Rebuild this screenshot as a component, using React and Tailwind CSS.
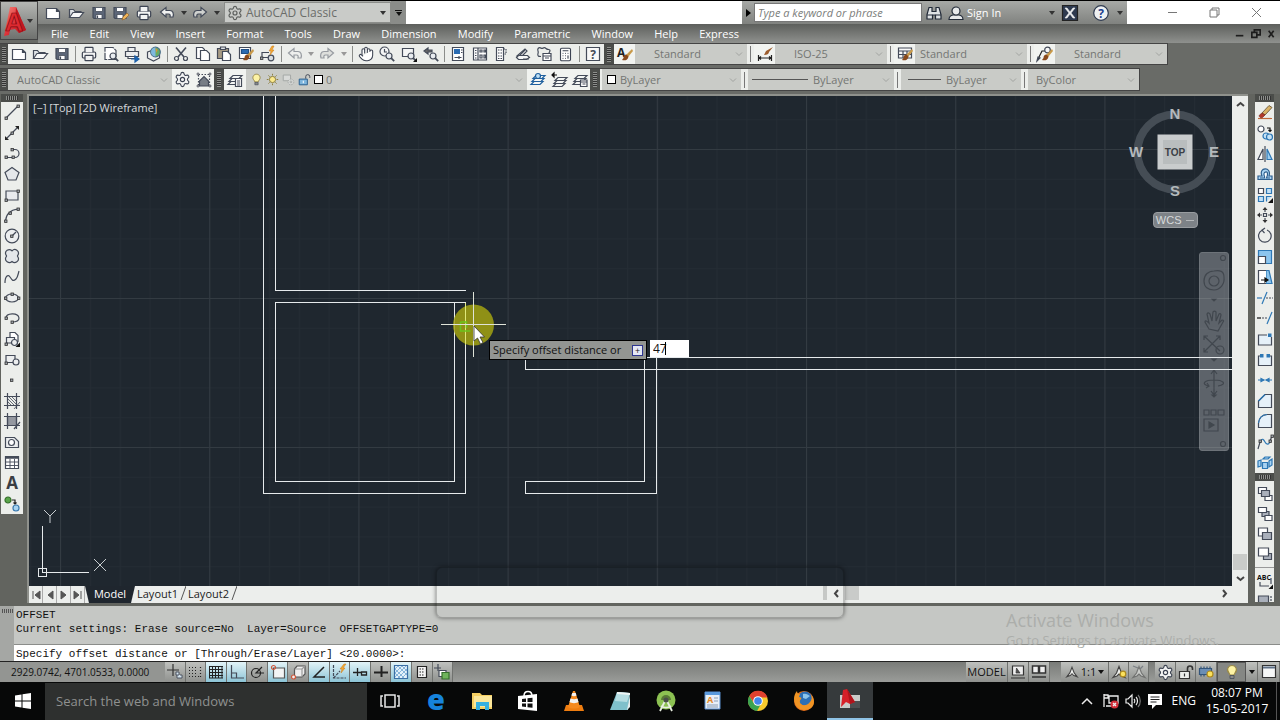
import { Calculator, Hand, Printer, Settings } from "lucide-react";

const INK = "#444b59";

const tree = {
  fill: "none",
  stroke: INK,
  strokeWidth: 1.2,
};

const node = (x, y) => (
  <rect x={x - 1} y={y - 1} width="2.4" height="2.4" fill="#9aa0a8" stroke="#333" strokeWidth="0.8" />
);

const layers = (color) => (
  <g fill="#f4f6f4" stroke={color}>
    <path d="M1 12.5 4 9.5h9l-3 3z" />
    <path d="M2 9.5 5 6.5h9l-3 3z" />
    <path d="M3 6.5 6 3.5h9l-3 3z" />
  </g>
);

const brush = (
  <g stroke="none">
    <path d="M15 3 9 9l2 2 5-6z" fill="#c99a4a" />
    <path d="M9.5 8.5c-2 0-3 1.500-3 3.500L5 14c3 1 6 0 6.500-3.500z" fill="#8a4a1c" />
  </g>
);

const magnifier = (
  <g>
    <circle cx="10" cy="10" r="3" fill="#e8ecf0" />
    <path d="m12.200 12.200 3 3" strokeWidth="1.800" />
  </g>
);

const person = (
  <path d="M8 2.500 5.500 9 2 13.500l4-1.500 2-2 2 2 4 1.500L10.500 9z" fill="#eef0ee" stroke="#444" />
);

const icons = {
  new: <path d="M1.500 3.500h10l3 3v7h-13zM11.500 3.500v3h3" fill="#fff" />,
  open: (
    <g>
      <path d="M1.500 12.500v-8h4l1.500 2h6v2" fill="#dfe3e6" />
      <path d="m1.500 12.500 3.500-5h10.500l-4 5z" fill="#f7f8f8" />
    </g>
  ),
  save: (
    <g>
      <path d="M2 2.500h12v11H3l-1-1z" fill="#5c6678" />
      <path d="M4.500 2.500h7v4h-7zM5 9.500h6v4H5z" fill="#fff" strokeWidth="0.800" />
      <path d="M6.500 10.500v2.500" />
    </g>
  ),
  saveAs: (
    <g>
      <path d="M1 2.500h12v11H2l-1-1z" fill="#5c6678" />
      <path d="M3.500 2.500h7v4h-7zM4 9.500h6v4H4z" fill="#fff" strokeWidth="0.800" />
      <path d="m9 15 1-3 4-4 2 2-4 4z" fill="#f0b45a" stroke="#8a5a22" strokeWidth="0.600" />
    </g>
  ),
  undo: <path d="M1.500 7 7 2.500v3h4c3 0 4 3 3 6.500h-3c.5-2 0-3-1.500-3H7v3z" fill="#f0f1f0" />,
  redo: <path d="M14.500 7 9 2.500v3H5c-3 0-4 3-3 6.500h3c-.5-2 0-3 1.500-3H9v3z" fill="#cfd1cf" />,
  preview: (
    <g>
      <path d="M2 1.500h8l3 3v9H2z" fill="#fff" strokeDasharray="9 1" />
      {magnifier}
    </g>
  ),
  publish: (
    <g>
      <path d="M4 1.500h7v4H4zM1.500 5.500h13v5h-13z" fill="#eceeef" />
      <path d="M4 10.500h7v2H4z" fill="#fff" />
      <path d="M7 13h7M11 10l4 3-4 3z" fill="#1b6ec2" stroke="#1b5ea8" />
    </g>
  ),
  web: (
    <g>
      <path d="m1.500 6 6-2 6 2v6l-6 3-6-3z" fill="#eef0f0" />
      <circle cx="9.500" cy="6" r="4.800" fill="#68ad62" stroke="#4a6e8c" />
      <path d="M9.500 1.500A4.500 4.500 0 0 0 9.500 10.500z" fill="#7fb8e0" stroke="none" />
      <path d="m9.500 2 2 2-1 3z" fill="#ec8b3a" stroke="none" />
    </g>
  ),
  cut: (
    <g>
      <path d="M3 1.500 11 11M13 1.500 5 11" strokeWidth="1.600" />
      <circle cx="3.500" cy="12.500" r="2" />
      <circle cx="12.500" cy="12.500" r="2" />
    </g>
  ),
  copy: (
    <g>
      <path d="M1.500 1.500h6l2 2v9h-8z" fill="#fff" />
      <path d="M5.500 4.500h6l3 3v7h-9z" fill="#fff" />
    </g>
  ),
  paste: (
    <g>
      <path d="M1.500 2.500h11v10h-11z" fill="#a79b84" />
      <path d="M4.500 1h5v2.500h-5z" fill="#dfe2e4" />
      <path d="M6.500 5.500h5l3 3v6h-8z" fill="#fff" />
    </g>
  ),
  match: (
    <g>
      <path d="M1.500 1.500h11v11h-11z" fill="#fff" />
      <path d="M3.500 3.500h7v4h-7z" fill="#2a6bb2" stroke="#1f4f86" />
      {brush}
    </g>
  ),
  block: (
    <g>
      <path d="M3 11.500v-5h7M3 11.500h8" />
      {node(2.5, 12)}
      <circle cx="12" cy="12" r="2.800" fill="#d8dde0" />
      <path d="m13 0-3 5h2l-1 4 4-5h-2l2-4z" fill="#f4a733" stroke="#c67b16" strokeWidth="0.500" />
    </g>
  ),
  zoomTime: (
    <g>
      <circle cx="5.500" cy="5.500" r="4.500" fill="#f4f5f5" />
      <path d="M5.500 3v3h2.500" />
      {magnifier}
    </g>
  ),
  zoomWin: (
    <g>
      <path d="M1.500 2.500h11v8h-11z" fill="#f4f5f5" />
      {magnifier}
      <path d="M16 12v4h-4z" fill="#111" stroke="none" />
    </g>
  ),
  zoomPrev: (
    <g>
      <path d="m1 5 4-3v2h4v2H5v2z" fill="#666" />
      {magnifier}
    </g>
  ),
  props: (
    <g>
      <path d="M2.500 1.500h11v13h-11z" fill="#fff" />
      <path d="M4 3h6v5H4z" fill="#2a6bb2" stroke="none" />
      <path d="M11 4h1.500M11 6.500h1.500M4.500 11.500h7M9 10v3" />
    </g>
  ),
  center: (
    <g>
      <path d="M1.500 2h13v12h-13zM6 2v12" fill="#fff" />
      <path d="M3 4.500h1.500M3 7h1.500M3 9.500h1.500M3 12h1.500M8 4h2v2H8zM12 4h1.500v2H12zM8 9h2v3H8zM12 9h1.500v3H12z" />
    </g>
  ),
  palette: (
    <g>
      <path d="M3.500 1.500h7v13h-7z" fill="#fff" />
      <path d="M10.500 3h2.500v5h-2.500M5 4h4M5 7h4M5 10h4M5 12.500h4" strokeDasharray="1.500 1" />
    </g>
  ),
  sheets: (
    <g fill="#f5f6f6">
      <path d="m2 10 8-7 2 2-6 6z" />
      <path d="m1.500 11.500 2-2h9l2 2-3 2h-8z" />
      <path d="m5 9 5-5M8 13h6" />
    </g>
  ),
  markup: (
    <g>
      <path d="M2 2.500c2-2 3 0 4 0s2-2 4 0 4 0 4 2-2 2-1 4M2 2.500c-1 3 1 2 0 5s1 3 3 3" />
      <path d="M7 7.500h8v7H7zM7 10h8M9 12h4" fill="#fff" />
    </g>
  ),
  help: (
    <g>
      <path d="M1.500 1.500h13v13h-13z" fill="#f8f8f8" />
      <text x="8" y="12.500" textAnchor="middle" fontSize="12" fontWeight="bold" fill={INK} stroke="none">?</text>
    </g>
  ),
  textStyle: (
    <g>
      <text x="0" y="11" fontSize="12" fontWeight="bold" fill="#222" stroke="none">A</text>
      {brush}
    </g>
  ),
  dimStyle: (
    <g>
      <path d="M1.500 9v6M14.500 9v6M2 12h12M4 10.500 2 12l2 1.500M12 10.500l2 1.500-2 1.500" stroke="#222" />
      <path d="M16 1 9 5l-2 4c3 0 5-1 5-3z" fill="#9c5c2c" stroke="none" />
    </g>
  ),
  tableStyle: (
    <g>
      <path d="M1.500 2h13v10h-13zM1.500 5h13M1.500 8.500h13M6 5v7M10 5v7" fill="#f6f7f7" />
      {brush}
    </g>
  ),
  leaderStyle: (
    <g>
      <path d="M1 13 5 5h4" stroke="#222" />
      <path d="m0 15 1-4 2 1z" fill="#222" />
      <circle cx="10.500" cy="4" r="2.800" fill="#f6f7f7" />
      {brush}
    </g>
  ),
  workspace: (
    <g>
      <path d="M2.500 2.500h11v11h-11z" strokeDasharray="1.500 1.500" />
      <path d="M3.500 9 8 4.500l4.500 4.500v5h-9z" fill="#777d86" />
      <path d="M1 1h2v2H1zM13 1h2v2h-2zM1 13h2v2H1zM13 13h2v2h-2z" fill="#aaa" strokeWidth="0.500" />
    </g>
  ),
  layerProps: (
    <g>
      {layers(INK)}
      <path d="M8.500 6.500h6v8h-6z" fill="#fff" />
      <path d="M10 9h3M10 11h3M10 13h3" />
    </g>
  ),
  layerBlue: (
    <g>
      {layers("#1e5f9e")}
      <circle cx="8" cy="4" r="2.500" fill="#bfe0f5" stroke="#1e5f9e" />
    </g>
  ),
  layerPrev: (
    <g>
      <g transform="translate(1 2)">{layers(INK)}</g>
      <path d="M1 3h5M3 1 1 3l2 2z" fill="#111" stroke="#111" />
    </g>
  ),
  layerState: (
    <g>
      {layers(INK)}
      <path d="M8.500 8h6.500v6.500H8.500zM8.500 10H15M10.500 12h3" fill="#fff" />
    </g>
  ),
  bulb: (
    <g>
      <path d="M5 9C2 6 4 1.500 8 1.500S14 6 11 9l-1 2H6z" fill="#fdf3a5" stroke="#9a8a4a" />
      <path d="M6 11.500h4v3H6z" fill="#888" strokeWidth="0.800" />
    </g>
  ),
  sun: (
    <g stroke="#8a7b3a">
      <path d="M8 1v2M8 13v2M1 8h2M13 8h2M3 3l1.500 1.500M11.500 11.500 13 13M13 3l-1.500 1.500M4.500 11.500 3 13" />
      <circle cx="8" cy="8" r="3.800" fill="#fbe98d" />
    </g>
  ),
  freeze: (
    <g stroke="#a4a8a6">
      <path d="M1.500 2.500h9v7h-9z" fill="#d8dad8" />
      <circle cx="11" cy="11" r="3.500" fill="#d8dad8" strokeDasharray="2 1" />
      <circle cx="11" cy="11" r="1.200" />
    </g>
  ),
  unlock: (
    <g>
      <path d="M9.500 7V4.500a2.500 2.500 0 0 1 5 0V6" />
      <path d="M1.500 7.500h10v7h-10z" fill="#7db5dd" stroke="#2a5f8e" />
      <path d="M6.500 9.500v3" stroke="#fff" />
    </g>
  ),
  lockUi: (
    <g stroke="#333">
      <path d="M9.500 7V4.500a2.500 2.500 0 0 1 5 0V6" strokeWidth="1.600" />
      <path d="M1.500 7.500h10v7h-10z" fill="#eceeec" />
      <path d="M6.500 9.500v3" />
    </g>
  ),
  line: <g><path d="M2 14 14 2" />{node(2, 14)}{node(14, 2)}</g>,
  xline: (
    <g>
      <path d="M2 14 14 2" />
      <path d="M1 15v-4l4 4zM15 1v4l-4-4z" fill="#222" stroke="none" />
      {node(8, 8)}
    </g>
  ),
  pline: <g><path d="M2 12.500h7M8 4.500h3a4 4 0 0 1 0 8" />{node(2, 12)}{node(9, 12)}{node(8, 4.5)}</g>,
  polygon: <path d="m8 1.500 7 5-3 7.500H4L1 6.500z" fill="#e4e7ea" />,
  rect: <g><path d="M2 4h12v9H2z" fill="#e8eaed" />{node(2, 13)}{node(14, 4)}</g>,
  arc: <g><path d="M1.500 14C2 7 6 3 14 2" />{node(1.6, 14)}{node(6, 6)}{node(14, 2)}</g>,
  circle: <g><circle cx="8" cy="8" r="6.800" fill="#eceeef" /><path d="m8 8 4-4" />{node(7.6, 8)}</g>,
  cloud: (
    <path
      d="M8 2.800c3-3 8 0 6 4.200-1 1-1 1 0 2 2 4-3 7-6 4.500C5 16 0 13 2 9c1-1 1-1 0-2C0 3 5 0 8 2.800z"
      fill="#e4e7ea"
    />
  ),
  spline: <path d="M1 14c0-7 3-9 5-6s3 5 6 2c2-2 2-5 3-8" />,
  ellipse: <g><ellipse cx="8" cy="8" rx="6.500" ry="4" fill="#eceeef" />{node(1.5, 8)}{node(14.500, 8)}{node(8, 4)}</g>,
  ellipseArc: <g><path d="M2 8c0-5 12-6 13 0 0 3-4 4-7 4" />{node(2, 8)}{node(8, 12)}</g>,
  insert: (
    <g>
      <path d="M6 1.500h5l3 3v6H6z" fill="#fff" />
      <path d="M2.500 12V6.500h8V12z" fill="#eceeef" />
      <circle cx="10.500" cy="11.500" r="3" fill="#eceeef" />
      <path d="M16 11.500V16h-4.500z" fill="#111" stroke="none" />
      {node(2, 13)}
    </g>
  ),
  makeBlock: (
    <g>
      <path d="M2 11.500v-7h9v7z" fill="#eceeef" />
      <circle cx="12" cy="11" r="3" fill="#eceeef" />
      {node(2, 12)}
    </g>
  ),
  point: node(7.500, 8),
  hatch: (
    <g>
      <path d="M3.500 0v16M12.500 0v16M0 3.500h16M0 12.500h16" />
      <path d="m4 9 3 3M4 6l6 6M5 4l7 7M8 4l4 4M16 9l-6 7" strokeWidth="0.800" />
    </g>
  ),
  gradient: (
    <g>
      <path d="M3.500 3.500h9v9h-9z" fill="#9498a0" />
      <path d="M3.500 0v16M12.500 0v16M0 3.500h16M0 12.500h16M16 9l-6 7" />
    </g>
  ),
  region: <g><path d="M1.500 3.500h9l4 4v6h-13z" fill="#eceeef" /><circle cx="7.500" cy="8.500" r="3" fill="#fff" /></g>,
  table: (
    <g>
      <path d="M1.500 2.500h13v12h-13z" fill="#fff" />
      <path d="M1.500 3.500h13" strokeWidth="2.500" />
      <path d="M1.500 8h13M1.500 11.500h13M6 5v9M10.500 5v9" strokeWidth="0.900" />
    </g>
  ),
  mtext: <text x="8" y="14" textAnchor="middle" fontSize="17" fontWeight="bold" fill="#3a3d42" stroke="none">A</text>,
  addSel: (
    <g>
      <circle cx="4" cy="4" r="3" fill="#5aa54a" stroke="#35702b" />
      <circle cx="12" cy="12" r="3" fill="#a8d4f2" stroke="#3a7ab0" />
      <path d="M8 4h3v4M9.500 6.500 11 8l1.500-1.500" stroke="#222" />
    </g>
  ),
  erase: (
    <g>
      <path d="M1 14.500h14" stroke="#c06a3c" />
      <path d="m5 9 7-7.500 3 2L8 11z" fill="#d9b266" stroke="#6b5a3c" strokeWidth="0.900" />
      <path d="m5 9 3 2-2.500 2.500c-2 1-4-1-3-2.500z" fill="#b3392b" stroke="#7a2a20" strokeWidth="0.700" />
    </g>
  ),
  copyObj: (
    <g>
      <circle cx="4" cy="4" r="3" fill="#fff" />
      <circle cx="9" cy="11" r="3" fill="#c5e2f6" stroke="#2e78b5" />
      <circle cx="12.500" cy="12" r="3" fill="#c5e2f6" stroke="#2e78b5" />
      <path d="M10 3h3v3M11.500 5 13 6.500 14.500 5" stroke="#111" />
    </g>
  ),
  mirror: (
    <g>
      <path d="M6 3v10.500H1z" fill="#fff" />
      <path d="M10 3v10.500h5z" fill="#9ccdf0" stroke="#2e78b5" />
      <path d="M8 0v16" />
    </g>
  ),
  offset: (
    <g stroke="#2e5f8e">
      <path d="M1 13.500V10h4C1 1 15 0 12 10h3v3.500z" fill="#a9d3f2" />
      <path d="M3 12h4.500c1-2-2-3 0-5.500 3-2 4 1 2 5.500H13" fill="#fff" />
    </g>
  ),
  array: (
    <g>
      <path d="M1.500 1.500h5v5h-5z" fill="#fff" />
      <path d="M9.500 1.500h5v5h-5zM1.500 9.500h5v5h-5zM9.500 14.500v-5h5" fill="#c5e2f6" stroke="#2e78b5" />
      <path d="M16 11v5h-5z" fill="#111" stroke="none" />
    </g>
  ),
  move: (
    <g>
      <path d="M8 0 5.500 3h5zM8 16l-2.500-3h5zM0 8l3-2.500v5zM16 8l-3-2.500v5z" fill="#333" stroke="none" />
      <path d="M8 3v2M8 11v2M3 8h2M11 8h2M6.500 6.500h3v3h-3z" />
    </g>
  ),
  rotate: <path d="M10 2a6.300 6.300 0 1 1-5 .3M8 0 5 2.200 7.500 5" />,
  scale: (
    <g>
      <path d="M1.500 1.500h13v13h-13z" fill="#8cc5ee" stroke="#2e78b5" />
      <path d="M1.500 7.500h7v7h-7z" fill="#fff" />
    </g>
  ),
  stretch: (
    <g>
      <path d="M9 1.500h3l3 13H9z" fill="#8cc5ee" stroke="#2e78b5" />
      <path d="M9 1.500H1.500v13H9" fill="#fff" />
      <path d="M4 11h6M8 9l3 2-3 2z" fill="#111" stroke="#111" />
    </g>
  ),
  trim: <g><path d="M10 2 5 14" stroke="#2e78b5" /><path d="M0 8h5" stroke="#2e78b5" /><path d="M9 8h7" strokeDasharray="2 1" /></g>,
  extend: <g><path d="M15 2 10 14" stroke="#2e78b5" /><path d="M0 8h4" stroke="#111" /><path d="M5 8h6" strokeDasharray="2 1" /></g>,
  breakPt: <g><path d="M14.500 6v8h-13V4H10" fill="#e6f1f9" /><path d="M11 2.500h3.500v3.500H11z" fill="#2e78b5" stroke="none" /></g>,
  breakObj: (
    <g>
      <path d="M3 4H1.500v9.500h13V4H13" fill="#e6f1f9" />
      <path d="M3 2h3.500v3.500H3zM9.500 2H13v3.500H9.500z" fill="#2e78b5" stroke="none" />
    </g>
  ),
  join: <path d="M1 8h5M15 8h-5M4 6.500 7 8l-3 1.500zM12 6.500 9 8l3 1.500z" fill="#2e78b5" stroke="#2e78b5" />,
  chamfer: <g><path d="M14.500 1.500v13h-13V8L8 1.500z" fill="#e6f1f9" /><path d="m1.500 8 6.500-6.500" stroke="#2e78b5" /></g>,
  fillet: <g><path d="M14.500 1.500v13h-13V10C2 5 5 2 10 1.500z" fill="#e6f1f9" /><path d="M1.500 10C2 5 5 2 10 1.500" stroke="#2e78b5" /></g>,
  blend: (
    <g>
      <path d="M3 8c2-5 4-2 5 0s4 4 5-1" stroke="#2e78b5" />
      <path d="m1 15 2-7M13 7l2-5" />
      {node(3, 7)}
      {node(13, 7)}
      {node(15, 2)}
    </g>
  ),
  explode: (
    <g fill="#a9d3f2" stroke="#2e78b5">
      <path d="M5.500 7.500h5v6h-5zM1 6l3-1v6l-3 1zM6 4l2-2h5l-2 2zM12 6l3-2v6l-3 2z" />
    </g>
  ),
  front: (
    <g>
      <path d="M1.500 1.500h8v6h-8zM8 9.500h7v5H8z" fill="#fff" />
      <path d="M4.500 4.500h8v6h-8z" fill="#aab0bb" />
    </g>
  ),
  back: (
    <g>
      <path d="M5 5.500h7v5H5z" fill="#aab0bb" />
      <path d="M1.500 1.500h8v5h-8zM8 9.500h7v5H8z" fill="#fff" />
    </g>
  ),
  above: <g><path d="M1.500 2h9v8h-9z" fill="#fff" /><path d="M5.500 6.500h9v7h-9z" fill="#aab0bb" /></g>,
  under: <g><path d="M6.500 7.500h8v6h-8z" fill="#aab0bb" /><path d="M1.500 2h10v8h-10z" fill="#fff" /></g>,
  abcFront: (
    <g>
      <text x="0" y="7" fontSize="7" fontWeight="bold" fill="#111" stroke="none">ABC</text>
      <path d="M3 9v4h9M14 5v6" />
      <path d="M16 11.500V16h-4.500z" fill="#111" stroke="none" />
    </g>
  ),
  hatchBack: <g><path d="M1.500 4h10v8h-10z" fill="#aab0bb" /><path d="M14 4v12" strokeDasharray="2 1" /></g>,
  // status bar
  infer: (
    <g>
      <path d="M0 6h12M6 0v12" stroke="#333" />
      <path d="M9 8h3v3H9zM13 11h2v3h-5v-3" fill="#d5e5ef" strokeWidth="0.900" />
    </g>
  ),
  snap: <path d="M2 3.500h9M2 6.500h9M2 9.500h9M2 12.500h12M13.500 3v10" strokeDasharray="1 2" stroke="#222" />,
  grid: <path d="M1.500 2v12M4.500 2v12M7.500 2v12M10.500 2v12M14 2v12M1 2.500h14M1 5.500h14M1 8.500h14M1 11.500h14M1 14h14" stroke="#222" strokeWidth="1" />,
  ortho: <path d="M2.500 1v13H15M2.500 9h5v5" />,
  polar: <g><circle cx="7" cy="9" r="4.500" stroke="#222" /><path d="M15 9H7l6-6" stroke="#222" /></g>,
  osnap: (
    <g>
      <path d="M3.500 4h11v10h-11z" fill="#f3f4f4" stroke="#555" />
      <circle cx="3.500" cy="3.500" r="2" stroke="#d0563a" />
    </g>
  ),
  osnap3d: (
    <g>
      <path d="M4.500 5 7 2h8v8l-3 3H4.500z" fill="#eee" stroke="#555" />
      <path d="M4.500 5H12v8M12 5l3-3" stroke="#999" />
      <circle cx="3.500" cy="13" r="2" fill="#eee" stroke="#d0563a" />
    </g>
  ),
  otrack: <path d="M13 3 3 13h11" stroke="#222" strokeWidth="1.500" />,
  ducs: (
    <g>
      <path d="M2.500 1v13H15M2.500 14 9 7" strokeDasharray="3 1" />
      <path d="m13 0-4 5h2l-1 4 4-5h-2l3-4z" fill="#f4a733" stroke="#c67b16" strokeWidth="0.500" />
    </g>
  ),
  dyn: <path d="M1 8.500h8M5.500 4v8M9.500 8h5v3h-5z" stroke="#222" strokeWidth="1.300" />,
  lwt: <path d="M1 8.500h14M8.500 2v11" stroke="#222" strokeWidth="2" />,
  tpy: (
    <g>
      <path d="M1.500 1.500h13v13h-13z" fill="#e3f1fa" stroke="#3a6ea5" />
      <path d="m2 5 3-3M2 9l7-7M2 13 13 2M5 14l9-9M9 14l5-5M2 9l5 5M2 5l9 9M5 2l9 9M9 2l5 5" stroke="#6fa6d2" strokeWidth="0.800" />
    </g>
  ),
  qp: <g><path d="M3.500 2.500h9v11h-9z" fill="#f4f4f4" stroke="#222" /><path d="M5.500 5h5M5.500 8h5M5.500 11h5" strokeDasharray="1.500 1" stroke="#222" /></g>,
  sc: (
    <g>
      <path d="M0 4h7M4 0v7" />
      <path d="M5 6.500h7v6H5z" fill="#fff" />
      <path d="M8 8.500h7v6.500H8z" fill="#6fb45c" stroke="#35702b" />
    </g>
  ),
  modelSpace: <g><path d="M2.500 2h11v9h-11zM1 14h14" fill="#eee" stroke="#333" /><path d="m6 9 .5-5L10 9z" fill="#555" stroke="#333" strokeWidth="0.700" /></g>,
  quickView: <path d="M1.500 2h6v7h-6zM8.500 2h6v7h-6zM1 13h14" fill="#eee" stroke="#333" strokeWidth="1.500" />,
  anno: person,
  annoBulb: <g>{person}<circle cx="12" cy="10" r="2.800" fill="#fbe25e" stroke="#ae8a1c" /></g>,
  annoAuto: <g opacity="0.500">{person}<path d="m2 2 5 2M12 2 9 5" /></g>,
  hardware: (
    <g>
      <path d="M1.500 4.500h12v6h-12zM3 2.500v2M6 2.500v2M9 2.500v2M12 2.500v2M3 10.500v2M6 10.500v2" fill="#6b8eb4" stroke="#33557b" />
      <circle cx="12" cy="10" r="3" fill="#fbe25e" stroke="#ae8a1c" />
    </g>
  ),
  clean: <g><path d="M1.500 1.500h13v12h-13z" fill="#f6f7f7" stroke="#333" /><path d="M2 3.500h12" strokeWidth="2" stroke="#5f7188" /></g>,
  binoculars: (
    <g fill="#dfe2e4" stroke="#222a38">
      <path d="M3 2.500h3v4h4v-4h3l2 7v4.500H9.500v-4h-3v4H1V9.500z" />
      <path d="M1 10h5.500M9.500 10H15" />
    </g>
  ),
  user: (
    <g fill="#e8eaec" stroke="#222a38">
      <path d="M1 14.500c0-4 4-4.500 4-4.500h6s4 .5 4 4.500z" />
      <circle cx="8" cy="6" r="4" />
    </g>
  ),
  exchange: (
    <g>
      <path d="M.5.500h15v15H.5z" fill="#2e3a50" stroke="#222" />
      <path d="m3 3 4 5-4 5h2l3-4 3 4h2L9 8l4-5h-2L8 7 5 3z" fill="#eef0f2" stroke="#eef0f2" strokeWidth="0.600" />
    </g>
  ),
  infoHelp: (
    <g>
      <circle cx="8" cy="8" r="7.300" fill="#eef0f2" stroke="#2e3a50" />
      <text x="8" y="12.500" textAnchor="middle" fontSize="12" fontWeight="bold" fill="#1d3f8f" stroke="none">?</text>
    </g>
  ),
};

function Icon({ name, className = "size-4" }) {
  return (
    <svg viewBox="0 0 16 16" className={`${className} shrink-0 overflow-visible`} {...tree} aria-hidden="true">
      {icons[name]}
    </svg>
  );
}

function Glyph({ name }) {
  if (name === "print") return <Printer size={16} strokeWidth={1.8} color="#3c4352" fill="#f2f3f3" />;
  if (name === "hand") return <Hand size={16} strokeWidth={1.6} color="#3c4352" fill="#fff" />;
  if (name === "gear") return <Settings size={17} strokeWidth={1.6} color="#3c4352" fill="#f2f3f3" />;
  if (name === "calc") return <Calculator size={15} strokeWidth={1.8} color="#3c4352" fill="#fff" />;
  return <Icon name={name} />;
}

function ToolButton({ name, className = "flex-1" }) {
  return (
    <button aria-label={name} className={`${className} flex items-center justify-center min-w-0 min-h-0`}>
      <Glyph name={name} />
    </button>
  );
}

function Caret({ className = "border-t-[#333]" }) {
  return <span className={`${className} border-x-3 border-x-transparent border-t-4`} />;
}

function Grip({ width = "w-[10px]" }) {
  return (
    <div className={`${width} shrink-0 bg-[#4b4d4a] flex items-center justify-center`}>
      <span className="w-1 h-[15px] bg-[repeating-linear-gradient(#8d8f8c_0_1px,#333_1px_2px)]" />
    </div>
  );
}

function GripTop() {
  return (
    <div className="h-2 shrink-0 bg-[#4b4d4a] flex items-center justify-center">
      <span className="h-1 w-3 bg-[repeating-linear-gradient(90deg,#8d8f8c_0_1px,#333_1px_2px)]" />
    </div>
  );
}

function Divider() {
  return <span className="w-[6px] shrink-0 flex justify-center"><span className="w-px h-4 bg-[#8b8d8a]" /></span>;
}

function Gap() {
  return (
    <span className="w-[7px] shrink-0 bg-[#eceeeb] flex items-center justify-center">
      <span className="w-px h-4 bg-[#777]" />
    </span>
  );
}

function Drop({ label, value, width, pad = "pl-[18px]", children }) {
  return (
    <div className={`${width} relative flex items-center bg-[#c9cbc7] text-[#747673] shrink-0`}>
      {children}
      <select aria-label={label} className={`${pad} appearance-none flex-1 min-w-0 h-full text-[11px] leading-4 bg-transparent outline-none`}>
        <option>{value}</option>
      </select>
      <svg className="absolute right-1 size-2 pointer-events-none" viewBox="0 0 8 8" fill="none" stroke="#a2a4a1">
        <path d="m1 2.500 3 3 3-3" />
      </svg>
    </div>
  );
}

function Logo() {
  return (
    <button
      aria-label="Application menu"
      className="w-[38px] h-[39px] shrink-0 border border-[#444] bg-linear-to-b from-[#b5b7b4] to-[#6f716e] flex items-center justify-between pr-1"
    >
      <svg viewBox="0 0 26 36" className="w-[26px] h-9 overflow-visible font-['Liberation_Sans',sans-serif]">
        <defs>
          <linearGradient id="logoRed" x1="0" y1="0" x2="1" y2="1">
            <stop offset="0" stopColor="#f4877c" />
            <stop offset="0.500" stopColor="#e0343a" />
            <stop offset="1" stopColor="#a80f18" />
          </linearGradient>
        </defs>
        <path d="M9 4h6l10 23-7 3-4-4-5 1-1 5-5 1z" fill="url(#logoRed)" />
        <path d="M15 4 25 27l-7 3-4-9z" fill="#c01820" />
        <text x="13" y="28" textAnchor="middle" fontSize="25" fontWeight="bold" fill="#dd2a31" stroke="#7d0a10" strokeWidth="0.700">A</text>
      </svg>
      <Caret />
    </button>
  );
}

const menus = ["File", "Edit", "View", "Insert", "Format", "Tools", "Draw", "Dimension", "Modify", "Parametric", "Window", "Help", "Express"];

function Header() {
  return (
    <header className="flex bg-[#696b67] border-t border-black">
      <Logo />
      <div className="flex-1 min-w-0 flex flex-col">
        <div className="h-[23px] flex bg-linear-to-b from-[#a7a9a6] to-[#80827f]">
          <div className="w-[186px] pl-1 flex items-center">
            {["new", "open", "save", "saveAs", "print", "undo"].map((n) => <ToolButton key={n} name={n} />)}
            <button aria-label="Undo list" className="w-3 flex justify-center"><Caret /></button>
            <ToolButton name="redo" className="w-5" />
            <button aria-label="Redo list" className="w-[14px] flex justify-center"><Caret /></button>
          </div>
          <div className="w-[167px] my-px pl-[2px] bg-[#c9cbc8] border border-[#8b8d8a] flex items-center relative">
            <Settings size={16} strokeWidth={1.8} color="#5d605e" />
            <select aria-label="Workspace" className="appearance-none flex-1 h-full pl-[3px] text-[12px] leading-4 text-[#6b6d6a]">
              <option>AutoCAD Classic</option>
            </select>
            <Caret className="absolute right-1 border-t-[#333] pointer-events-none" />
          </div>
          <button aria-label="Customize" className="w-[15px] bg-[#8a8c89] flex flex-col items-center justify-center gap-px">
            <span className="w-[7px] h-px bg-[#111]" />
            <Caret className="border-t-[#111]" />
          </button>
          <div className="flex-1 bg-white" />
          <button aria-label="Collapse search" className="w-3 flex items-center justify-center">
            <span className="border-y-4 border-y-transparent border-l-5 border-l-black" />
          </button>
          <input
            aria-label="Search help"
            placeholder="Type a keyword or phrase"
            className="w-[168px] my-[2px] px-[3px] bg-white border border-[#777] text-[11px] leading-4 italic placeholder:text-[#7b7d7a] outline-none"
          />
          <div className="w-[205px] flex items-center">
            <ToolButton name="binoculars" className="w-6" />
            <button className="flex items-center gap-[3px] pl-[2px] text-[11px] leading-4 text-white"><Icon name="user" />Sign In</button>
            <span className="flex-1" />
            <Caret />
            <ToolButton name="exchange" className="w-[30px]" />
            <ToolButton name="infoHelp" className="w-8" />
            <Caret />
            <span className="w-1" />
          </div>
          <div className="w-[153px] bg-white flex items-center justify-end">
            {["M1 5.500h9", "M1 3h7v7H1zM3 3V1h7v7H8", "m1 1 9 9M10 1l-9 9"].map((d, i) => (
              <button key={d} aria-label={["Minimize", "Restore", "Close"][i]} className="w-[42px] flex justify-center">
                <svg className="size-[11px]" viewBox="0 0 11 11" fill="none" stroke="#777"><path d={d} /></svg>
              </button>
            ))}
            <span className="w-[3px]" />
          </div>
        </div>
        <nav className="h-[19px] bg-linear-to-b from-[#5d5f5c] via-[#767875] to-[#8f918e] flex items-center justify-between pl-[13px]">
          <div className="w-[688px] flex justify-between">
            {menus.map((m) => (
              <a key={m} href="#" className="text-[11px] leading-4 text-white">{m}</a>
            ))}
          </div>
          <div className="flex">
            {["M1 8h9", "M1 4h6v6H1zM4 4V1h7v6H7", "m2 2 6 8M8 2 2 10"].map((d, i) => (
              <button key={d} aria-label={["Minimize drawing", "Restore drawing", "Close drawing"][i]} className="w-4 flex justify-center">
                <svg className="size-[10px]" viewBox="0 0 12 12" fill="none" stroke="#1d1d1d" strokeWidth="2"><path d={d} /></svg>
              </button>
            ))}
          </div>
        </nav>
      </div>
    </header>
  );
}

const standardTools = [
  "new", "open", "save", "|", "print", "preview", "publish", "web", "|", "cut", "copy", "paste", "match", "block", "|",
  "undo", "v", "redo", "v", "|", "hand", "zoomTime", "zoomWin", "zoomPrev", "|",
  "props", "center", "palette", "sheets", "markup", "calc", "|", "help",
];

const styleTools = [
  { icon: "textStyle", label: "Text style", value: "Standard", pad: "pl-[19px]" },
  { icon: "dimStyle", label: "Dimension style", value: "ISO-25", pad: "pl-[19px]" },
  { icon: "tableStyle", label: "Table style", value: "Standard", pad: "pl-[5px]" },
  { icon: "leaderStyle", label: "Multileader style", value: "Standard", pad: "pl-[19px]" },
];

function Toolbars() {
  return (
    <div className="bg-[#696b67] flex flex-col gap-[3px] pb-[3px]">
      <div className="flex h-[22px]">
        <div className="flex border-y border-r border-[#444]">
          <Grip width="w-2" />
          <div className="w-[596px] bg-[#eceeeb] flex items-center">
            {standardTools.map((t, i) => {
              if (t === "|") return <Divider key={i} />;
              if (t === "v") return <button key={i} aria-label="History" className="w-[11px] flex justify-center"><Caret className="border-t-[#999]" /></button>;
              return <ToolButton key={i} name={t} className={t === "undo" || t === "redo" ? "flex-1 opacity-50" : "flex-1"} />;
            })}
          </div>
          <Grip />
          {styleTools.map((s, i) => (
            <div key={s.label} className="flex">
              {i > 0 && <Gap />}
              <ToolButton name={s.icon} className="w-[21px] bg-[#f1f3f0]" />
              <Drop label={s.label} value={s.value} width="w-[112px]" pad={s.pad} />
            </div>
          ))}
        </div>
      </div>
      <div className="flex h-[23px]">
        <div className="flex border-y border-r border-[#444]">
          <Grip width="w-2" />
          <Drop label="Workspaces" value="AutoCAD Classic" width="w-[164px]" pad="pl-[9px]" />
          <div className="w-[42px] flex bg-[#f1f3f0]">
            <ToolButton name="gear" />
            <ToolButton name="workspace" />
          </div>
          <Grip />
          <ToolButton name="layerProps" className="w-[22px] bg-[#f1f3f0]" />
          <Drop label="Layer" value="0" width="w-[281px]" pad="pl-[3px]">
            <span className="flex items-center pl-1 gap-[3px]">
              <Icon name="bulb" className="size-[13px]" />
              <Icon name="sun" className="size-[13px]" />
              <Icon name="freeze" className="size-[13px]" />
              <Icon name="unlock" className="size-[13px]" />
              <span className="size-[9px] border border-black bg-white" />
            </span>
          </Drop>
          <div className="w-[63px] flex bg-[#f1f3f0]">
            <ToolButton name="layerBlue" />
            <ToolButton name="layerPrev" />
            <ToolButton name="layerState" />
          </div>
          <Grip />
          <span className="w-[2px] bg-[#eceeeb]" />
          <Drop label="Color" value="ByLayer" width="w-[139px]" pad="pl-1">
            <span className="size-[9px] ml-[5px] border border-black bg-white" />
          </Drop>
          <Gap />
          <Drop label="Linetype" value="ByLayer" width="w-[146px]" pad="pl-[5px]">
            <span className="w-14 h-px ml-1 bg-[#555]" />
          </Drop>
          <Gap />
          <Drop label="Lineweight" value="ByLayer" width="w-[120px]" pad="pl-[5px]">
            <span className="w-[33px] h-px ml-[7px] bg-[#555]" />
          </Drop>
          <Gap />
          <Drop label="Plot style" value="ByColor" width="w-[111px]" pad="pl-2" />
        </div>
      </div>
    </div>
  );
}

const drawTools = [
  "line", "xline", "pline", "polygon", "rect", "arc", "circle", "cloud", "spline", "ellipse",
  "ellipseArc", "insert", "makeBlock", "point", "hatch", "gradient", "region", "table", "mtext", "addSel",
];

const modifyTools = [
  "erase", "copyObj", "mirror", "offset", "array", "move", "rotate", "scale", "stretch",
  "trim", "extend", "breakPt", "breakObj", "join", "chamfer", "fillet", "blend", "explode",
];

// model space, in pixels from the top left corner of the viewport
function Drawing() {
  return (
    <svg className="absolute inset-0 size-full pointer-events-none" aria-hidden="true">
      <defs>
        <pattern id="minor" x="31" y="53" width="29.840" height="29.800" patternUnits="userSpaceOnUse">
          <path d="M.5 0v30M0 .5h30" stroke="#fff" strokeOpacity="0.022" fill="none" />
        </pattern>
        <pattern id="major" x="31" y="53" width="149.200" height="149" patternUnits="userSpaceOnUse">
          <path d="M.5 0v149M0 .5h149" stroke="#fff" strokeOpacity="0.070" fill="none" />
        </pattern>
      </defs>
      <rect width="100%" height="100%" fill="url(#minor)" />
      <rect width="100%" height="100%" fill="url(#major)" />
      <g fill="none" stroke="#e6eaec" shapeRendering="crispEdges">
        <path d="M234.500 0v397.500h202v-191h-190v179h179v-179M246.500 0v194.500h190" />
        <path d="M496.500 261.500v12M615.500 261.500v124h-119v12h131v-136" />
        <line x1="496" y1="261.500" x2="100%" y2="261.500" />
        <line x1="496" y1="273.500" x2="100%" y2="273.500" />
        <path d="M13.500 430v46.500H60M9.500 472.500h8v8h-8z" />
      </g>
      <path d="m15 414 6 6 6-6M21 420v7M65 463l12 12M77 463l-12 12" fill="none" stroke="#c9ced1" />
      <circle cx="444.500" cy="229" r="20.500" fill="#a3a312" opacity="0.850" />
      <path d="M436.500 207v42" stroke="#dfe87a" />
      <path d="M431.500 226v9h10M431.500 226h6v6" fill="none" stroke="#6cc31c" strokeWidth="1.500" />
      <path d="M412 228.500h65M444.500 196v65" stroke="#dfe3d8" />
      <path d="M445 230v15l3.500-3 3 6 2.500-1.500-3-5.500h4.500z" fill="#fff" stroke="#333" strokeWidth="0.800" />
    </svg>
  );
}

function ViewCube() {
  return (
    <div className="absolute right-[7px] top-[6px] flex flex-col items-center gap-[10px] font-['Liberation_Sans',sans-serif]">
      <svg viewBox="-4 -4 100 100" className="size-[100px] overflow-visible" fontSize="15" fontWeight="bold" fill="#b4b9bc" textAnchor="middle">
        <circle cx="46" cy="46" r="37.500" fill="none" stroke="#454d55" strokeWidth="8" />
        <path d="M28.500 28.500h35v35h-35z" fill="#c9cccd" />
        <path d="M34 34h24v24H34z" fill="#b9bdbe" />
        <text x="46" y="13">N</text>
        <text x="46" y="90">S</text>
        <text x="7" y="51">W</text>
        <text x="85" y="51">E</text>
        <text x="46" y="50" fontSize="10" fill="#3b4046">TOP</text>
      </svg>
      <button className="w-[45px] h-4 rounded-sm bg-[#7d8287] border border-[#989ca0] text-[11px] leading-3 text-[#d7dadb] flex items-center justify-around">
        WCS <span className="w-2 h-px bg-[#b5b8ba]" />
      </button>
    </div>
  );
}

function NavBar() {
  return (
    <div className="absolute right-[3px] top-[156px] w-[30px] h-[199px] rounded-[3px] bg-[#5d636a] border border-[#6d7379]">
      <svg viewBox="0 0 28 197" className="size-full" fill="none" stroke="#41474e" strokeWidth="1.200">
        <circle cx="23" cy="5" r="2.500" />
        <path d="M14 18c6-1 10 0 10 6 1 7-4 13-10 13S4 34 4 28s4-10 10-10z" />
        <circle cx="14" cy="28" r="5" />
        <path d="M12 46h4l-2 2zM12 106h4l-2 2zM12 142h4l-2 2z" fill="#41474e" />
        <path d="m9 76-4-7c0-2 2-1 4 1l-2-9c1-2 2-1 3 0l2 7 1-9c1-1 2-1 3 0v9l3-7c1-1 2 0 2 1l-2 8 3-3c2 0 2 1 1 2l-5 9z" />
        <path d="m4 83 16 15M20 83 4 99M4 87v-4h4M16 83h4v4M4 95v4h4" />
        <circle cx="20" cy="97" r="4" />
        <path d="M14 118v23M11 121l3-4 3 4M11 138l3 4 3-4M9 133c-9-2-4-6 5-6s14 4 4 6M7 130l2 3-3 2" />
        <path d="M4 157h5v5H4zM11 157h5v5h-5zM18 157h6v5h-6zM4 166h14v12H4z" />
        <path d="m9 169 5 3-5 3z" fill="#41474e" />
        <circle cx="23" cy="191" r="2.500" />
      </svg>
    </div>
  );
}

function Chevron({ d }) {
  return (
    <svg className="size-[9px]" viewBox="0 0 9 9" fill="none" stroke="#444" strokeWidth="2"><path d={d} /></svg>
  );
}

function LayoutTabs() {
  return (
    <div className="h-[17px] flex bg-[#eceeec] text-[11px] leading-4 text-[#222]">
      {["M2 1v8M9 1 4 5l5 4z", "M8 1 3 5l5 4z", "M2 1l5 4-5 4z", "M8 1v8M1 1l5 4-5 4z"].map((d, i) => (
        <button key={d} aria-label={["First", "Previous", "Next", "Last"][i]} className="w-[14px] border-r border-[#aaa] flex items-center justify-center">
          <svg className="size-[10px]" viewBox="0 0 10 10" fill="#555" stroke="#555"><path d={d} /></svg>
        </button>
      ))}
      <a href="#" className="w-[50px] bg-[#1f262e] text-white text-center [clip-path:polygon(0_0,100%_0,92%_100%,8%_100%)]">Model</a>
      {["Layout1", "Layout2"].map((t) => (
        <a key={t} href="#" className="w-[51px] flex justify-between">
          <span className="flex-1 text-center">{t}</span>
          <svg className="w-[6px] h-4" viewBox="0 0 6 16" stroke="#555"><path d="M6 0 1 14" /></svg>
        </a>
      ))}
      <div className="flex-1 flex">
        <span className="flex-1" />
        <span className="w-1 h-[14px] bg-[#c6c8c6]" />
        <button aria-label="Scroll left" className="w-[18px] h-[14px] flex items-center justify-center"><Chevron d="M6 1 3 4.500 6 8" /></button>
        <span className="w-[14px] h-[14px] bg-[#c9cbc9]" />
        <span className="w-[357px]" />
        <button aria-label="Scroll right" className="w-4 h-[14px] mr-4 flex items-center justify-center"><Chevron d="m3 1 3 3.500L3 8" /></button>
      </div>
    </div>
  );
}

function Workspace() {
  return (
    <main className="flex-1 min-h-0 flex bg-[#62645f] overflow-hidden">
      <div className="w-[22px] ml-px mr-1 shrink-0">
        <GripTop />
        <div className="h-[412px] bg-[#eceeeb] flex flex-col">
          {drawTools.map((t) => <ToolButton key={t} name={t} />)}
        </div>
      </div>
      <div className="flex-1 min-w-0 flex flex-col border-t-2 border-l-2 border-[#8f918c] bg-[#eceeec]">
        <div className="flex-1 min-h-0 flex">
          <div className="flex-1 relative bg-[#1f272f] overflow-hidden">
            <NavBar />
            <Drawing />
            <p className="absolute left-1 top-1 text-[11px] leading-4 text-[#d6d9db]">[−] [Top] [2D Wireframe]</p>
            <ViewCube />
            <div className="absolute left-[460px] top-[244px] flex items-start gap-[3px]">
              <label htmlFor="offset" className="w-[158px] h-5 px-[3px] bg-[#939592] border border-black flex items-center justify-between text-[11px] leading-4 text-[#111]">
                Specify offset distance or
                <span className="size-[11px] bg-[#e6e8f4] border border-[#2e3590] text-[9px] leading-[9px] text-center">+</span>
              </label>
              <input id="offset" defaultValue="47" className="w-[39px] h-[17px] px-[3px] bg-white text-[12px] leading-4 text-[#111] outline-none" />
              <span className="absolute left-[176px] top-[2px] w-px h-[13px] bg-black" />
            </div>
          </div>
          <div className="w-4 shrink-0 flex flex-col items-center">
            <button aria-label="Scroll up" className="h-4 flex items-center"><Chevron d="m1 6 3.500-3L8 6" /></button>
            <span className="flex-1" />
            <span className="w-[14px] h-4 bg-[#c9cbc9]" />
            <button aria-label="Scroll down" className="h-4 flex items-center"><Chevron d="m1 3 3.500 3L8 3" /></button>
          </div>
        </div>
        <LayoutTabs />
      </div>
      <div className="w-[19px] ml-[7px] mr-[6px] shrink-0 flex flex-col overflow-hidden mb-px">
        <GripTop />
        <div className="h-[371px] shrink-0 bg-[#eceeeb] flex flex-col">
          {modifyTools.map((t) => <ToolButton key={t} name={t} />)}
        </div>
        <GripTop />
        <div className="bg-[#eceeeb] flex flex-col shrink-0 pt-[3px]">
          {["front", "back", "above", "under"].map((t) => <ToolButton key={t} name={t} className="h-5" />)}
          <span className="h-px my-[3px] bg-[#999]" />
          <ToolButton name="abcFront" className="h-5" />
          <ToolButton name="hatchBack" className="h-[18px]" />
        </div>
      </div>
    </main>
  );
}

function CommandLine() {
  return (
    <section className="h-[58px] shrink-0 pt-[3px] bg-[#62645f] flex relative">
      <div className="w-[14px] bg-[#a5a7a4] pt-[3px] flex justify-center">
        <span className="w-[11px] h-1 bg-[repeating-linear-gradient(90deg,#555_0_1px,#a5a7a4_1px_2px)]" />
      </div>
      <div className="flex-1 flex flex-col font-['Liberation_Mono',monospace] text-[11px] leading-[14px] text-[#111]">
        <pre className="h-[39px] pl-[2px] pt-[2px] bg-[#c5c7c4] border-b border-[#8b8d8a] font-['Liberation_Mono',monospace]">
          {"OFFSET\nCurrent settings: Erase source=No  Layer=Source  OFFSETGAPTYPE=0"}
        </pre>
        <input
          aria-label="Command"
          defaultValue="Specify offset distance or [Through/Erase/Layer] <20.0000>:"
          className="flex-1 min-h-0 pl-[2px] pt-px bg-white outline-none"
        />
      </div>
      <div className="absolute right-[54px] top-[5px] w-[220px] text-[#acaeab]">
        <p className="text-[18px] leading-6">Activate Windows</p>
        <p className="text-[13px] leading-4">Go to Settings to activate Windows.</p>
      </div>
    </section>
  );
}

const toggles = [
  ["infer", 0], ["snap", 0], ["grid", 1], ["ortho", 1], ["polar", 0], ["osnap", 1], ["osnap3d", 0],
  ["otrack", 1], ["ducs", 1], ["dyn", 1], ["lwt", 0], ["tpy", 1], ["qp", 0], ["sc", 0],
];

const plain = "bg-linear-to-b from-[#bfc1be] to-[#8f918e] border-r border-[#70726f]";

function StatusBar() {
  return (
    <div className="h-[21px] shrink-0 border-t border-[#222] bg-linear-to-b from-[#7a7c79] to-[#9a9c99] flex text-[#111]">
      <p className="w-[165px] pl-[11px] text-[10px] leading-5 whitespace-nowrap bg-[#939592]">2929.0742, 4701.0533, 0.0000</p>
      <div className="w-[288px] flex">
        {toggles.map(([name, on]) => (
          <ToolButton
            key={name}
            name={name}
            className={on ? "flex-1 bg-linear-to-b from-[#e2f3f7] to-[#8cc4d6] border-r border-[#70726f]" : `flex-1 ${plain}`}
          />
        ))}
      </div>
      <span className="flex-1" />
      <button className={`w-[42px] text-[11px] leading-5 ${plain}`}>MODEL</button>
      <ToolButton name="modelSpace" className={`w-[21px] ${plain}`} />
      <ToolButton name="quickView" className={`w-[21px] ${plain}`} />
      <span className="w-[11px]" />
      <button className={`w-12 flex items-center justify-center gap-[2px] text-[11px] leading-5 ${plain}`}>
        <Icon name="anno" className="size-[14px]" />1:1<Caret className="border-t-[#111]" />
      </button>
      <ToolButton name="annoBulb" className={`w-5 ${plain}`} />
      <ToolButton name="annoAuto" className={`w-5 ${plain}`} />
      <span className="w-[6px]" />
      <ToolButton name="gear" className={`w-[21px] ${plain}`} />
      <ToolButton name="lockUi" className={`w-5 ${plain}`} />
      <ToolButton name="hardware" className={`w-[21px] ${plain}`} />
      <ToolButton name="bulb" className="w-[29px] bg-[#858784] border border-[#555]" />
      <button aria-label="Status bar menu" className={`w-3 flex items-center justify-center ${plain}`}><Caret className="border-t-[#111]" /></button>
      <ToolButton name="clean" className={`w-[22px] ${plain}`} />
    </div>
  );
}

const apps = {
  Edge: <text x="11" y="20" textAnchor="middle" fontSize="29" fontWeight="900" fill="#1683dc">e</text>,
  Explorer: (
    <g>
      <path d="M1 3h8l2 2h10v14H1z" fill="#f5cf62" />
      <path d="M3 6h18v11H3z" fill="#fbe69a" />
      <path d="M5 12h13v8h-4v-4H9v4H5z" fill="#35b0e0" />
    </g>
  ),
  Store: (
    <g>
      <path d="M7 6c0-6 8-6 8 0" fill="none" stroke="#fff" strokeWidth="1.500" />
      <path d="m1 6 19-2v17L1 19z" fill="#fff" />
      <path d="m5 9 4-.5V12H5zM10.500 8.300l5-.5V12h-5zM5 13.500h4V17l-4-.5zM10.500 13.500h5v4.300l-5-.6z" fill="#111" />
    </g>
  ),
  VLC: (
    <g>
      <path d="M3 15h16l2 6H1z" fill="#ee7d10" />
      <path d="M10 1h2l5 16c-3 2-9 2-12 0z" fill="#f58a1f" />
      <path d="m8.500 5 .8-2h3.400l.8 2.500c-1.500 1-3.500 1-5 0zM6.500 12l1-3.500c2 1 5 1 7 0l1 3.500c-2 1.500-7 1.500-9 0z" fill="#f2f2f2" />
    </g>
  ),
  Notes: (
    <g>
      <path d="m8 2 13 1-2 17H1z" fill="#7fc0cb" />
      <path d="m8 2 13 1-3 9-12-1z" fill="#b5dde2" />
      <path d="m8 2 13 1v2L8 4z" fill="#eef4f4" />
      <path d="m18 20 3-15v12z" fill="#e4edee" />
    </g>
  ),
  Studio: (
    <g>
      <circle cx="11" cy="10" r="9.500" fill="#8cc152" />
      <path d="M6 10a5 5 0 0 1 10 0z" fill="#587a36" />
      <path d="m11 9-6 12M11 9l6 12M6 16c3 2 7 2 10 0" fill="none" stroke="#e8efe0" strokeWidth="1.800" />
      <circle cx="11" cy="10" r="2.500" fill="#4a4f4a" />
    </g>
  ),
  WordPad: (
    <g>
      <path d="M4 2h15v17H4z" fill="#e8f0f8" stroke="#5a8fd0" />
      <path d="M4 2h15v3H4z" fill="#5a9ade" />
      <text x="9" y="13" textAnchor="middle" fontSize="9" fontWeight="bold" fill="#e48a28">A</text>
      <path d="M13 8h4M13 11h4M6 15h11M6 17h11" stroke="#8a9db5" />
    </g>
  ),
  Chrome: (
    <g>
      <circle cx="11" cy="11" r="10" fill="#f7ca2d" />
      <path d="M2.300 6A10 10 0 0 1 20.500 7.500H11L7 13z" fill="#e0402f" />
      <path d="M2.300 6A10 10 0 0 0 10 21l4.500-8-7.500.5z" fill="#3ba351" />
      <circle cx="11" cy="11" r="4.800" fill="#fff" />
      <circle cx="11" cy="11" r="3.800" fill="#4285ea" />
    </g>
  ),
  Firefox: (
    <g>
      <circle cx="11" cy="11" r="10" fill="#e6701a" />
      <circle cx="12" cy="8.500" r="7" fill="#2c6fb5" />
      <path d="M10 4c3-1 5 1 7 2l-4 3-3-1z" fill="#8cc4ea" />
      <path d="M1 9c0-3 1-6 3-8 0 2 1 3 3 3l-1 3c2 0 3 1 2 2s-2 3 0 5 6 2 9-2c2-2 2-5 1-7 4 4 4 10 0 13S2 22 1 9z" fill="#f09424" />
    </g>
  ),
  AutoCAD: (
    <g>
      <path d="M1 6h20v13H1z" fill="#c9cbc9" />
      <path d="M11 12h10v7H11z" fill="#4d5052" />
      <path d="m4 1 4-1 8 13-5 2-4-2-5 5z" fill="#d62029" />
      <path d="m8 0 8 13-5 2z" fill="#b0141c" />
    </g>
  ),
};

function Taskbar() {
  return (
    <footer className="h-[38px] shrink-0 bg-[#070808] flex items-center text-white">
      <button aria-label="Start" className="w-[45px] flex justify-center">
        <svg className="size-4" viewBox="0 0 16 16" fill="#fff"><path d="m0 2.500 6.500-1v6H0zM7.500 1.300 16 0v7.500H7.500zM0 8.500h6.500v6l-6.500-1zM7.500 8.500H16V16l-8.500-1.300z" /></svg>
      </button>
      <input
        aria-label="Search"
        placeholder="Search the web and Windows"
        className="w-[322px] h-[37px] px-[11px] bg-[#2e302f] text-[13px] leading-5 placeholder:text-[#8f918f] outline-none"
      />
      <button aria-label="Task view" className="w-[46px] flex justify-center">
        <svg className="w-5 h-4" viewBox="0 0 20 16" fill="none" stroke="#e8e8e8" strokeWidth="1.500"><path d="M5 2h10v12H5zM3 3H1v10h2M17 3h2v10h-2" /></svg>
      </button>
      {Object.keys(apps).map((name) => (
        <button
          key={name}
          aria-label={name}
          className={name === "AutoCAD" ? "w-[46px] h-full bg-[#363a3c] border-b-2 border-[#8fc3e6] flex items-center justify-center" : "w-[46px] h-full flex items-center justify-center"}
        >
          <svg className="size-[22px] overflow-visible" viewBox="0 0 22 22">{apps[name]}</svg>
        </button>
      ))}
      <span className="flex-1" />
      <div className="flex items-center gap-[6px] text-[12px] leading-4">
        <svg className="w-3 h-2" viewBox="0 0 12 8" fill="none" stroke="#eee" strokeWidth="1.500"><path d="m1 7 5-5 5 5" /></svg>
        <svg className="size-4 ml-1" viewBox="0 0 16 16" fill="none" stroke="#eee" strokeWidth="1.300">
          <path d="M1 1v13M1 2h4v3H1M6 3h9v7H6zM3 13h8" />
          <circle cx="11.500" cy="11.500" r="4" fill="#d3303a" stroke="none" />
          <path d="m10 10 3 3M13 10l-3 3" />
        </svg>
        <svg className="size-4" viewBox="0 0 16 16" fill="none" stroke="#eee" strokeWidth="1.200"><path d="M1 6h2l4-4v12l-4-4H1zM9 6c1 1 1 3 0 4M11 4c2 2 2 6 0 8" /><path d="M13 2c3 3 3 9 0 12" stroke="#777" /></svg>
        <svg className="size-4" viewBox="0 0 16 16"><path d="M1 1h14v11H9l-4 4v-4H1z" fill="#fff" /><path d="M3.500 4h9M3.500 6.500h9M3.500 9h6" stroke="#222" /></svg>
        <span className="ml-[3px]">ENG</span>
      </div>
      <div className="w-[78px] ml-[2px] text-center text-[12px] leading-4 whitespace-nowrap">
        <p>08:07 PM</p>
        <p>15-05-2017</p>
      </div>
      <span className="w-1 h-full border-l border-[#555]" />
    </footer>
  );
}

export default function App() {
  return (
    <div className="relative h-screen flex flex-col overflow-hidden font-['Open_Sans','Noto_Sans',sans-serif]">
      <Header />
      <Toolbars />
      <Workspace />
      <CommandLine />
      <StatusBar />
      <Taskbar />
      <div className="absolute left-[436px] bottom-[102px] w-[408px] h-[51px] rounded-md border border-black/20 shadow-[0_0_4px_rgba(0,0,0,0.5)] pointer-events-none" />
    </div>
  );
}
